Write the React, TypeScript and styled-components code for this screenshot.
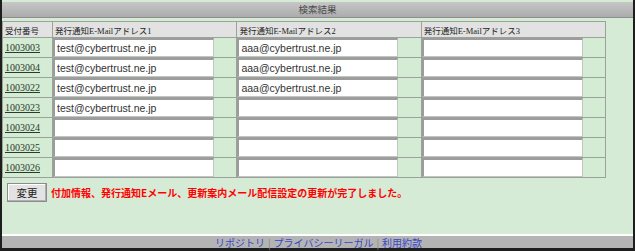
import React from "react";
import styled, { createGlobalStyle } from "styled-components";

const GlobalStyle = createGlobalStyle`
  html, body { margin: 0; padding: 0; background: #ffffff; }
  * { box-sizing: border-box; }
`;

const Frame = styled.div`
  width: 635px;
  height: 251px;
  background: #d6ebd6;
  border-left: 2px solid #1e1e1e;
  border-right: 2px solid #1e1e1e;
  border-bottom: 3px solid #1e1e1e;
  padding-top: 2px;
  display: flex;
  flex-direction: column;
  font-family: "Liberation Sans", "Noto Sans CJK JP", sans-serif;
`;

const TitleBar = styled.div`
  height: 16px;
  background: linear-gradient(#c6c6c6, #acacac);
  border-bottom: 1px solid #8e8e8e;
  color: #4a4a4a;
  font-size: 9.5px;
  line-height: 15px;
  text-align: center;
  font-family: "Noto Sans CJK JP", sans-serif;
`;

const ResultTable = styled.table`
  margin-top: 3px;
  width: 604px;
  border-collapse: collapse;
  table-layout: fixed;
`;

const HeadCell = styled.th<{ $w: number }>`
  width: ${(p) => p.$w}px;
  height: 16px;
  padding: 0 0 0 2px;
  background: #e2e2e2;
  border: 1px solid #9aa39a;
  color: #222;
  font-family: "Liberation Serif", "Noto Sans CJK JP", serif;
  font-size: 8.5px;
  font-weight: normal;
  text-align: left;
  vertical-align: middle;
  white-space: nowrap;
`;

const Cell = styled.td`
  height: 20px;
  padding: 0;
  background: #d4ebd4;
  border: 1px solid #9aa39a;
  vertical-align: middle;
`;

const IdLink = styled.a`
  display: block;
  padding-left: 2px;
  color: #2b3a2b;
  font-family: "Liberation Serif", serif;
  font-size: 10px;
  text-decoration: underline;
`;

const MailBox = styled.div`
  width: 161px;
  height: 19px;
  background: #ffffff;
  border-top: 2px solid #9c9c9c;
  border-left: 2px solid #9c9c9c;
  border-right: 1px solid #c4c4c4;
  border-bottom: 1px solid #c4c4c4;
  color: #333;
  font-size: 10.5px;
  line-height: 16px;
  padding-left: 2px;
  white-space: nowrap;
  overflow: hidden;
`;

const ActionRow = styled.div`
  display: flex;
  align-items: center;
  gap: 4px;
  margin: 5px 0 0 5px;
`;

const ChangeButton = styled.button`
  width: 40px;
  height: 19px;
  padding: 0;
  background: #e3e3e3;
  border: 1px solid #8c8c8c;
  box-shadow: inset -1px -1px 0 #b0b0b0, inset 1px 1px 0 #ffffff;
  color: #222;
  font-family: "Noto Sans CJK JP", sans-serif;
  font-size: 10.5px;
  line-height: 17px;
`;

const Message = styled.span`
  color: #ff0000;
  font-family: "Noto Sans CJK JP", sans-serif;
  font-weight: bold;
  font-size: 10px;
`;

const Spacer = styled.div`
  flex: 1;
`;

const Footer = styled.div`
  height: 14px;
  border-top: 2px solid #ffffff;
  background: #b4b4b4;
  display: flex;
  justify-content: center;
  align-items: center;
  gap: 3px;
  font-family: "Noto Sans CJK JP", sans-serif;
  font-size: 10px;
  padding-left: 2px;
`;

const FooterLink = styled.a`
  color: #3848c8;
  text-decoration: none;
`;

const Sep = styled.span`
  color: #8a8a8a;
`;

const rows = [
  { id: "1003003", m1: "test@cybertrust.ne.jp", m2: "aaa@cybertrust.ne.jp", m3: "" },
  { id: "1003004", m1: "test@cybertrust.ne.jp", m2: "aaa@cybertrust.ne.jp", m3: "" },
  { id: "1003022", m1: "test@cybertrust.ne.jp", m2: "aaa@cybertrust.ne.jp", m3: "" },
  { id: "1003023", m1: "test@cybertrust.ne.jp", m2: "", m3: "" },
  { id: "1003024", m1: "", m2: "", m3: "" },
  { id: "1003025", m1: "", m2: "", m3: "" },
  { id: "1003026", m1: "", m2: "", m3: "" },
];

export default function App() {
  return (
    <>
      <GlobalStyle />
      <Frame>
        <TitleBar>検索結果</TitleBar>
        <ResultTable>
          <thead>
            <tr>
              <HeadCell $w={50}>受付番号</HeadCell>
              <HeadCell $w={184}>発行通知E-Mailアドレス1</HeadCell>
              <HeadCell $w={184}>発行通知E-Mailアドレス2</HeadCell>
              <HeadCell $w={184}>発行通知E-Mailアドレス3</HeadCell>
            </tr>
          </thead>
          <tbody>
            {rows.map((r) => (
              <tr key={r.id}>
                <Cell>
                  <IdLink href="#">{r.id}</IdLink>
                </Cell>
                <Cell>
                  <MailBox>{r.m1}</MailBox>
                </Cell>
                <Cell>
                  <MailBox>{r.m2}</MailBox>
                </Cell>
                <Cell>
                  <MailBox>{r.m3}</MailBox>
                </Cell>
              </tr>
            ))}
          </tbody>
        </ResultTable>
        <ActionRow>
          <ChangeButton>変更</ChangeButton>
          <Message>付加情報、発行通知Eメール、更新案内メール配信設定の更新が完了しました。</Message>
        </ActionRow>
        <Spacer />
        <Footer>
          <FooterLink href="#">リポジトリ</FooterLink>
          <Sep>|</Sep>
          <FooterLink href="#">プライバシーリーガル</FooterLink>
          <Sep>|</Sep>
          <FooterLink href="#">利用約款</FooterLink>
        </Footer>
      </Frame>
    </>
  );
}
